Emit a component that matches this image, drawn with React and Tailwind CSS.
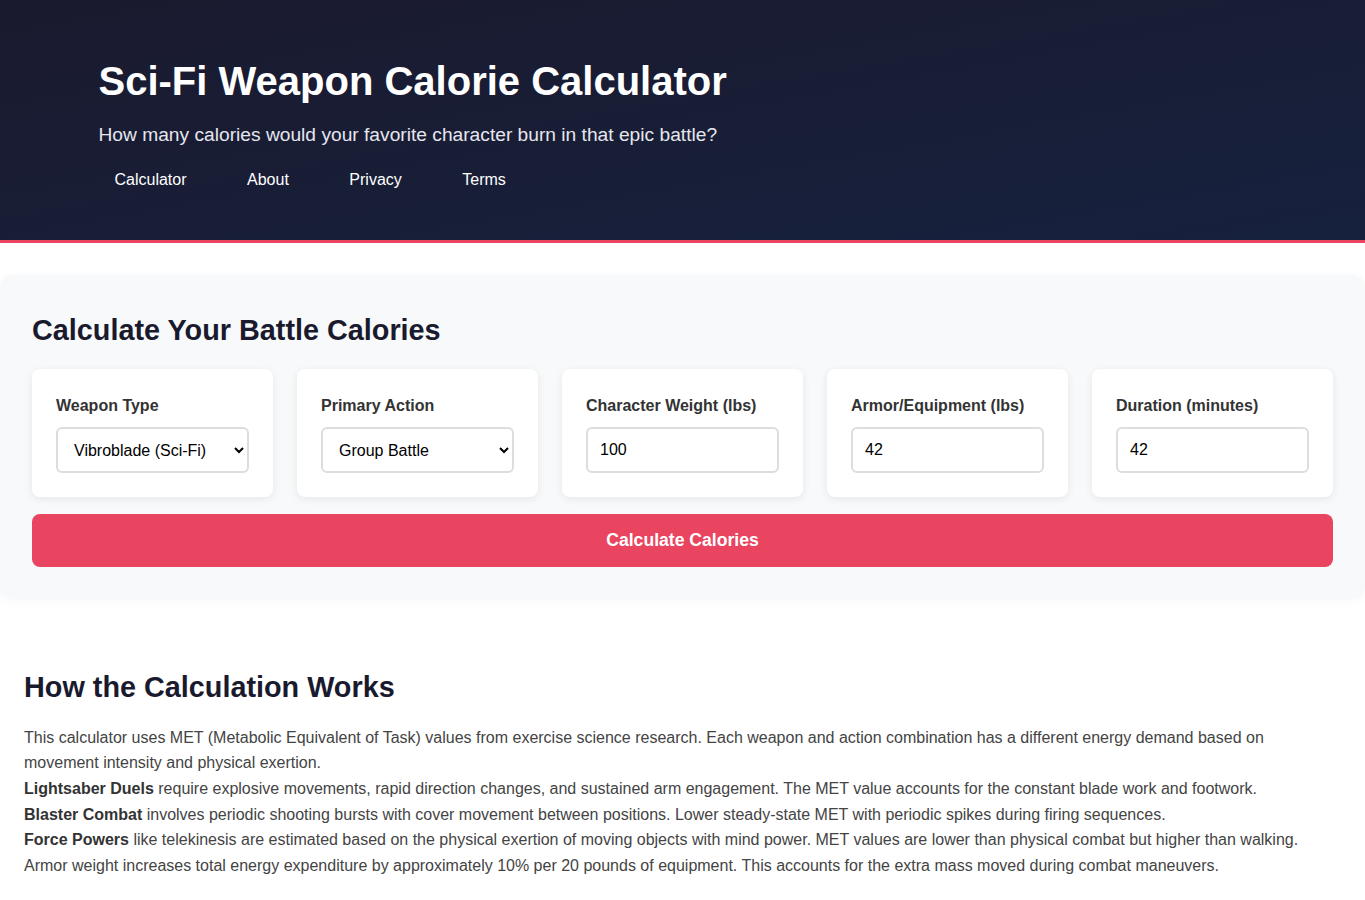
import React from "react";

export default function App() {
  return (
    <div className="bg-white min-h-[900px] font-['Liberation_Sans',Arial,sans-serif] text-[#333]">
      <header className="bg-gradient-to-br from-[#1a1a2e] to-[#16213e] border-b-[3px] border-[#e94560] pt-[57px] pb-[40px]">
        <div className="max-w-[1200px] mx-auto px-4">
          <h1 className="text-[40px] leading-[48px] font-bold text-white mb-[15px]">
            Sci-Fi Weapon Calorie Calculator
          </h1>
          <p className="text-[19.2px] leading-[30.7px] text-[#e6e6ee] mb-[8px]">
            How many calories would your favorite character burn in that epic battle?
          </p>
          <nav className="flex gap-[28.5px]">
            {["Calculator", "About", "Privacy", "Terms"].map((t) => (
              <a key={t} href="#" className="px-4 py-2 text-base leading-[25.6px] text-white">
                {t}
              </a>
            ))}
          </nav>
        </div>
      </header>

      <section className="mt-8 bg-[#f8f9fa] rounded-xl shadow-[0_2px_12px_rgba(0,0,0,0.03)] px-8 pt-[38px] pb-8">
        <h2 className="text-[28.8px] leading-[34.6px] font-bold text-[#1a1a2e] mb-[21.4px]">
          Calculate Your Battle Calories
        </h2>
        <div className="grid grid-cols-5 gap-6">
          <Card label="Weapon Type">
            <select className="w-full h-[46px] border-2 border-[#dddddd] rounded-md px-3 text-base bg-white text-black" defaultValue="vibro">
              <option value="vibro">Vibroblade (Sci-Fi)</option>
            </select>
          </Card>
          <Card label="Primary Action">
            <select className="w-full h-[46px] border-2 border-[#dddddd] rounded-md px-3 text-base bg-white text-black" defaultValue="group">
              <option value="group">Group Battle</option>
            </select>
          </Card>
          <Card label="Character Weight (lbs)">
            <input className="w-full h-[46px] border-2 border-[#dddddd] rounded-md px-3 text-base bg-white text-black" defaultValue="100" />
          </Card>
          <Card label="Armor/Equipment (lbs)">
            <input className="w-full h-[46px] border-2 border-[#dddddd] rounded-md px-3 text-base bg-white text-black" defaultValue="42" />
          </Card>
          <Card label="Duration (minutes)">
            <input className="w-full h-[46px] border-2 border-[#dddddd] rounded-md px-3 text-base bg-white text-black" defaultValue="42" />
          </Card>
        </div>
        <button className="mt-[17px] w-full h-[53px] pb-[2px] bg-[#e94560] text-white font-bold text-[17.6px] rounded-lg">
          Calculate Calories
        </button>
      </section>

      <section className="px-6 pt-[71px] pb-8">
        <h2 className="text-[28.8px] leading-[34.6px] font-bold text-[#1a1a2e] mb-[20px]">
          How the Calculation Works
        </h2>
        <div className="text-base leading-[25.6px] text-[#444]">
          <p>
            This calculator uses MET (Metabolic Equivalent of Task) values from exercise science research. Each weapon and action combination has a different energy demand based on movement intensity and physical exertion.
          </p>
          <p>
            <strong className="text-[#333]">Lightsaber Duels</strong> require explosive movements, rapid direction changes, and sustained arm engagement. The MET value accounts for the constant blade work and footwork.
          </p>
          <p>
            <strong className="text-[#333]">Blaster Combat</strong> involves periodic shooting bursts with cover movement between positions. Lower steady-state MET with periodic spikes during firing sequences.
          </p>
          <p>
            <strong className="text-[#333]">Force Powers</strong> like telekinesis are estimated based on the physical exertion of moving objects with mind power. MET values are lower than physical combat but higher than walking.
          </p>
          <p>
            Armor weight increases total energy expenditure by approximately 10% per 20 pounds of equipment. This accounts for the extra mass moved during combat maneuvers.
          </p>
        </div>
      </section>
    </div>
  );
}

function Card({ label, children }) {
  return (
    <div className="bg-white rounded-lg p-6 shadow-[0_2px_8px_rgba(0,0,0,0.08)]">
      <label className="block text-base leading-[24px] pt-[1px] font-bold text-[#333] mb-[9px]">{label}</label>
      {children}
    </div>
  );
}
